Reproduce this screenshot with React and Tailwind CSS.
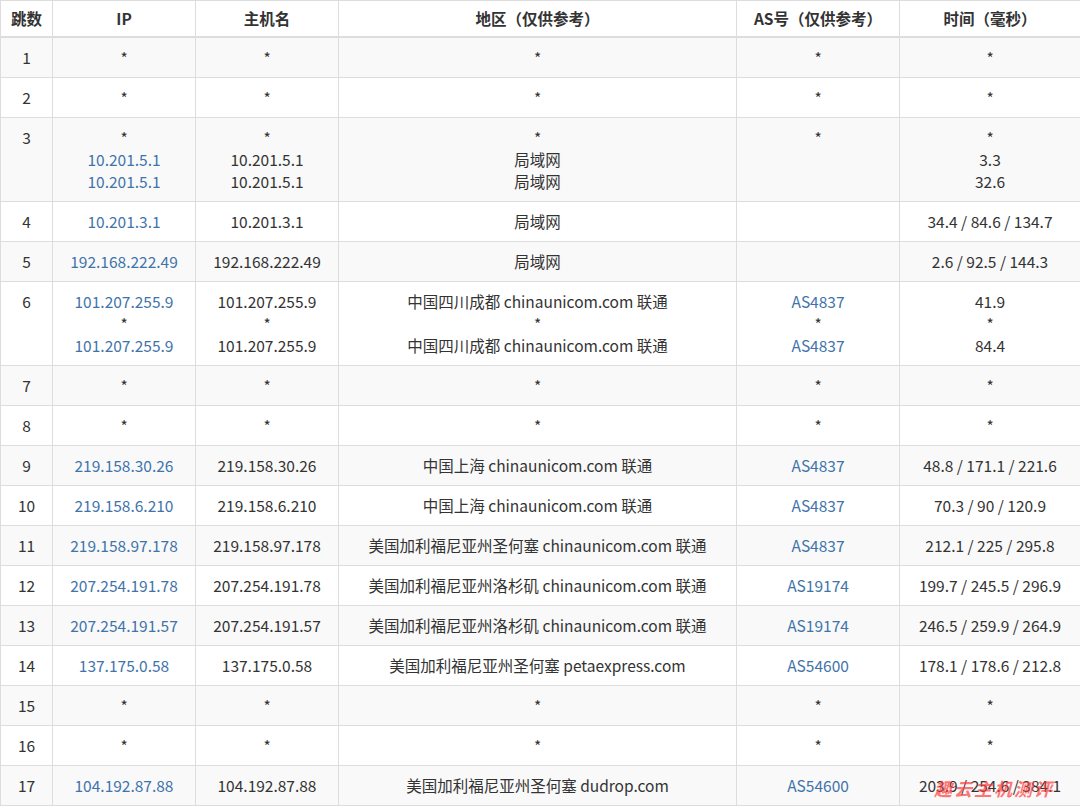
const rows = [
  ["1", ["*"], ["*"], ["*"], ["*"], ["*"]],
  ["2", ["*"], ["*"], ["*"], ["*"], ["*"]],
  ["3", ["*", "10.201.5.1", "10.201.5.1"], ["*", "10.201.5.1", "10.201.5.1"], ["*", "局域网", "局域网"], ["*"], ["*", "3.3", "32.6"]],
  ["4", ["10.201.3.1"], ["10.201.3.1"], ["局域网"], [], ["34.4 / 84.6 / 134.7"]],
  ["5", ["192.168.222.49"], ["192.168.222.49"], ["局域网"], [], ["2.6 / 92.5 / 144.3"]],
  ["6", ["101.207.255.9", "*", "101.207.255.9"], ["101.207.255.9", "*", "101.207.255.9"], ["中国四川成都 chinaunicom.com 联通", "*", "中国四川成都 chinaunicom.com 联通"], ["AS4837", "*", "AS4837"], ["41.9", "*", "84.4"]],
  ["7", ["*"], ["*"], ["*"], ["*"], ["*"]],
  ["8", ["*"], ["*"], ["*"], ["*"], ["*"]],
  ["9", ["219.158.30.26"], ["219.158.30.26"], ["中国上海 chinaunicom.com 联通"], ["AS4837"], ["48.8 / 171.1 / 221.6"]],
  ["10", ["219.158.6.210"], ["219.158.6.210"], ["中国上海 chinaunicom.com 联通"], ["AS4837"], ["70.3 / 90 / 120.9"]],
  ["11", ["219.158.97.178"], ["219.158.97.178"], ["美国加利福尼亚州圣何塞 chinaunicom.com 联通"], ["AS4837"], ["212.1 / 225 / 295.8"]],
  ["12", ["207.254.191.78"], ["207.254.191.78"], ["美国加利福尼亚州洛杉矶 chinaunicom.com 联通"], ["AS19174"], ["199.7 / 245.5 / 296.9"]],
  ["13", ["207.254.191.57"], ["207.254.191.57"], ["美国加利福尼亚州洛杉矶 chinaunicom.com 联通"], ["AS19174"], ["246.5 / 259.9 / 264.9"]],
  ["14", ["137.175.0.58"], ["137.175.0.58"], ["美国加利福尼亚州圣何塞 petaexpress.com"], ["AS54600"], ["178.1 / 178.6 / 212.8"]],
  ["15", ["*"], ["*"], ["*"], ["*"], ["*"]],
  ["16", ["*"], ["*"], ["*"], ["*"], ["*"]],
  ["17", ["104.192.87.88"], ["104.192.87.88"], ["美国加利福尼亚州圣何塞 dudrop.com"], ["AS54600"], ["203.9 / 254.6 / 384.1"]],
];

const heads = ["跳数", "IP", "主机名", "地区（仅供参考）", "AS号（仅供参考）", "时间（毫秒）"];
const widths = ["w-[52px]", "w-[143px]", "w-[143px]", "w-[398px]", "w-[163px]", "w-[181px]"];

function Lines({ items, link }) {
  return items.map((t, i) => (
    <div key={i} className={link && t !== "*" ? "text-[#3f74ab]" : ""}>{t}</div>
  ));
}

export default function App() {
  return (
    <div className="relative w-[1080px] h-[807px] overflow-hidden bg-white text-[#333] text-[15.5px] leading-[22px]" style={{ fontFamily: '"Noto Sans CJK SC", "Noto Sans", sans-serif' }}>
      <table className="w-[1080px] table-fixed border-collapse">
        <thead>
          <tr>
            {heads.map((h, i) => (
              <th key={i} className={`${widths[i]} h-[36px] p-0 border border-[#ddd] border-b-2 font-bold text-center`}>{h}</th>
            ))}
          </tr>
        </thead>
        <tbody>
          {rows.map((r, idx) => (
            <tr key={idx} className={idx % 2 === 0 ? "bg-[#f9f9f9]" : "bg-white"}>
              <td className="border border-[#ddd] align-top text-center pt-[8px] pb-[9px]">{r[0]}</td>
              {r.slice(1).map((c, j) => (
                <td key={j} className="border border-[#ddd] align-top text-center pt-[8px] pb-[9px]">
                  <Lines items={c} link={j === 0 || j === 3} />
                </td>
              ))}
            </tr>
          ))}
        </tbody>
      </table>
      <div className="absolute left-[934px] top-[777px] text-[18px] italic font-bold text-[#ff3b3b]/70 tracking-[2px]">趣云主机测评</div>
    </div>
  );
}
